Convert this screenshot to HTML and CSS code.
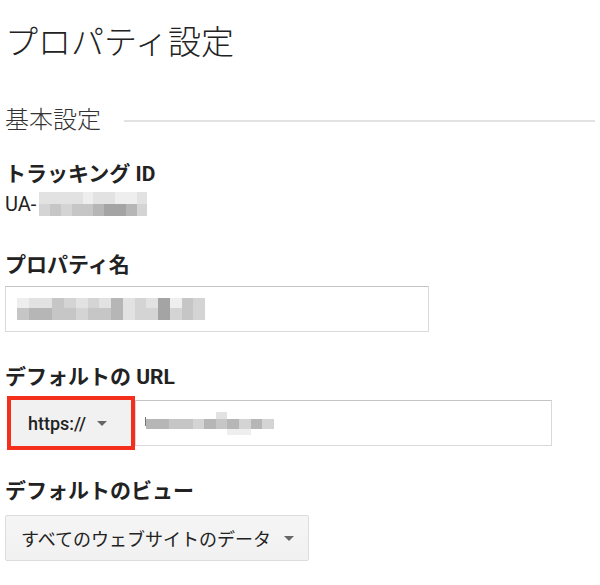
FILE: index.html
```html
<!DOCTYPE html>
<html lang="ja">
<head>
<meta charset="UTF-8">
<title>プロパティ設定</title>
<link rel="stylesheet" href="styles.css">
</head>
<body>
<h1 class="title">プロパティ設定</h1>

<div class="section">
  <span class="section-name">基本設定</span>
  <span class="section-rule"></span>
</div>

<div class="label lab-first">トラッキング ID</div>
<div class="ua-row">
  <span class="ua">UA-</span>
  <div class="mosaic m-ua">
    <i class="g2"></i><i class="g2"></i><i class="g2"></i><i class="g2"></i><i class="g1"></i><i class="g2"></i><i class="g2"></i><i class="g1"></i><i class="g1"></i><i class="g2"></i>
    <i class="g3"></i><i class="g4"></i><i class="g3"></i><i class="g4"></i><i class="g4"></i><i class="g5"></i><i class="g6"></i><i class="g6"></i><i class="g5"></i><i class="g3"></i>
  </div>
</div>

<div class="label lab-name">プロパティ名</div>
<div class="field field-name">
  <div class="mosaic m-name">
    <i class="g1"></i><i class="g2"></i><i class="g2"></i><i class="g4"></i><i class="g3"></i><i class="g2"></i><i class="g3"></i><i class="g2"></i><i class="g5"></i><i class="g2"></i><i class="g3"></i><i class="g2"></i><i class="g6"></i><i class="g1"></i><i class="g4"></i><i class="g3"></i>
    <i class="g4"></i><i class="g5"></i><i class="g5"></i><i class="g4"></i><i class="g4"></i><i class="g3"></i><i class="g4"></i><i class="g4"></i><i class="g5"></i><i class="g2"></i><i class="g3"></i><i class="g3"></i><i class="g6"></i><i class="g3"></i><i class="g4"></i><i class="g3"></i>
  </div>
</div>

<div class="label lab-url">デフォルトの URL</div>
<div class="url-row">
  <div class="mark">
    <div class="proto">https://<span class="caret"></span></div>
  </div>
  <div class="field field-url">
    <span class="tick"></span>
    <div class="mosaic m-url">
      <i class="g0"></i><i class="g0"></i><i class="g0"></i><i class="g0"></i><i class="g0"></i><i class="g0"></i><i class="g2"></i><i class="g0"></i><i class="g0"></i><i class="g0"></i><i class="g0"></i>
      <i class="g5"></i><i class="g5"></i><i class="g4"></i><i class="g4"></i><i class="g3"></i><i class="g5"></i><i class="g4"></i><i class="g5"></i><i class="g3"></i><i class="g5"></i><i class="g3"></i>
      <i class="g0"></i><i class="g0"></i><i class="g0"></i><i class="g0"></i><i class="g0"></i><i class="g0"></i><i class="g0"></i><i class="g1"></i><i class="g1"></i><i class="g0"></i><i class="g0"></i>
    </div>
  </div>
</div>

<div class="label lab-view">デフォルトのビュー</div>
<div class="select">すべてのウェブサイトのデータ<span class="caret"></span></div>

</body>
</html>
```

FILE: styles.css
```css
body{margin:0;padding:0 5px;background:#fff;color:#222;font-family:Roboto,"Noto Sans CJK JP",sans-serif;}

.title{margin:26px 0 0 0;font-size:33px;line-height:33px;font-weight:300;color:#222;}

.section{display:flex;align-items:center;margin-top:49px;height:24px;}
.section-name{font-size:24px;line-height:24px;font-weight:300;color:#333;}
.section-rule{flex:1;height:2px;margin:2px 0 0 23px;background:#e2e2e2;}

.label{font-size:21px;line-height:21px;font-weight:bold;color:#222;}
.lab-first{margin-top:32px;}
.lab-name{margin-top:39px;}
.lab-url{margin-top:35px;}
.lab-view{margin-top:31px;}

.ua-row{display:flex;align-items:center;height:24px;margin-top:7px;}
.ua{font-size:20px;line-height:24px;color:#222;}

.mosaic{display:grid;}
.mosaic i{display:block;}
.m-ua{width:108px;margin-left:3px;grid-template-columns:repeat(10,1fr);grid-template-rows:12px 12px;}
.m-name{width:188px;grid-template-columns:repeat(16,1fr);grid-template-rows:10px 12px;}
.m-url{width:128px;grid-template-columns:repeat(11,1fr);grid-template-rows:7px 10px 6px;}
.g0{background:transparent;}
.g1{background:#eeeeee;}
.g2{background:#e2e2e2;}
.g3{background:#d4d4d4;}
.g4{background:#c6c6c6;}
.g5{background:#b6b6b6;}
.g6{background:#a4a4a4;}

.field{box-sizing:border-box;height:46px;display:flex;align-items:center;border:1px solid #d9d9d9;border-top-color:#c4c4c4;background:#fff;}
.field-name{width:424px;margin-top:10px;padding-left:11px;}
.field-url{width:417px;padding-left:9px;}
.tick{width:1px;height:9px;background:#777;margin-top:-4px;}

.url-row{display:flex;align-items:center;margin-top:8px;}
.mark{margin-left:2px;border:4px solid #f4301c;}
.proto{box-sizing:border-box;width:120px;height:46px;display:flex;align-items:center;padding-left:17px;background:#f1f1f1;font-size:18px;font-weight:500;color:#222;}
.proto .caret{margin-left:11px;}

.caret{display:inline-block;width:0;height:0;border-left:5px solid transparent;border-right:5px solid transparent;border-top:5px solid #666;}

.select{box-sizing:border-box;display:flex;align-items:center;width:304px;height:46px;margin-top:13px;padding-left:15px;border:1px solid #dcdcdc;border-radius:2px;background:linear-gradient(to bottom,#f5f5f5,#f1f1f1);font-size:18px;color:#222;}
.select .caret{margin-left:13px;}
```
